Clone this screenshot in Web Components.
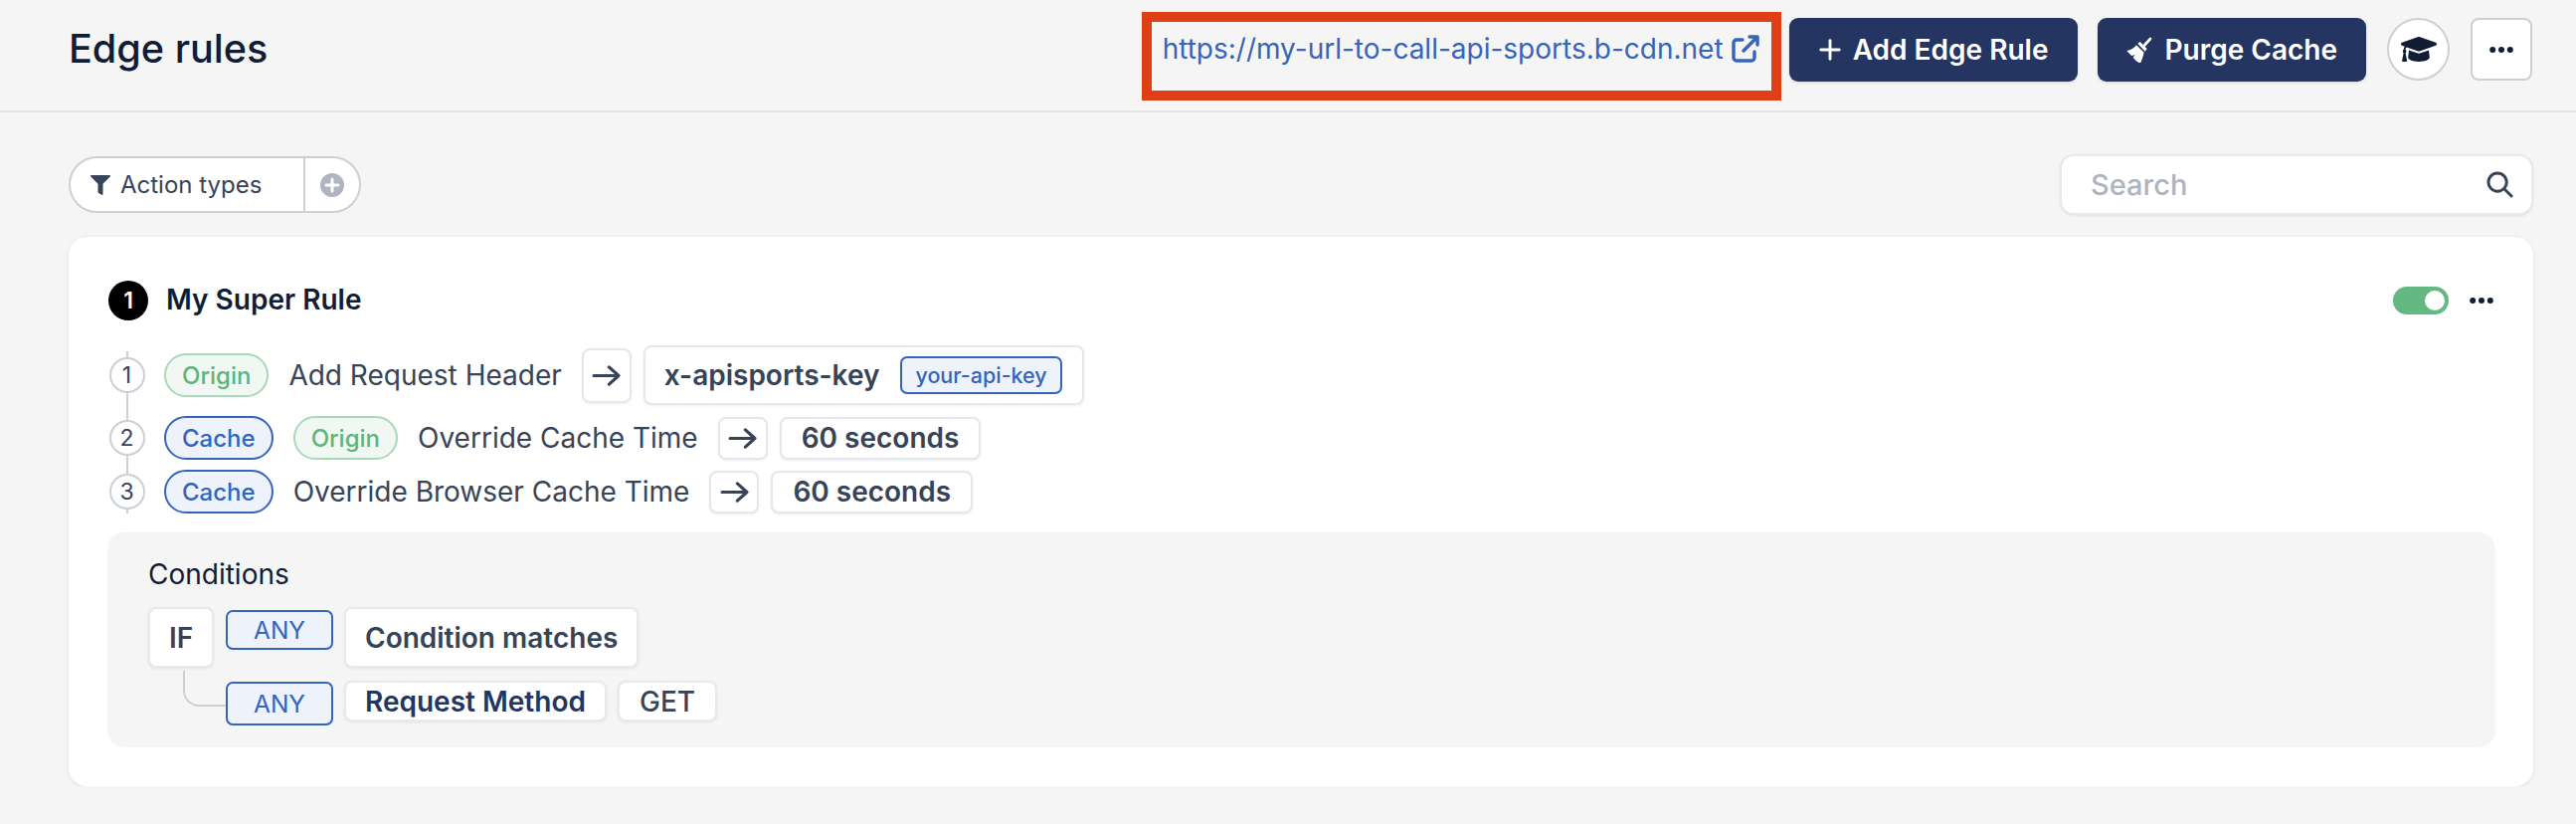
<!DOCTYPE html>
<html>
<head>
<meta charset="utf-8">
<title>Edge rules</title>
<style>
  html, body { margin: 0; background: #f5f5f5; }
  body { font-family: Inter, "Liberation Sans", sans-serif; color: #374357; font-size: 28px; }
</style>
</head>
<body>

<er-header></er-header>
<er-toolbar></er-toolbar>
<er-rule-card name="My Super Rule" index="1">
  <er-action num="1" first>
    <er-pill kind="green">Origin</er-pill>
    <er-label>Add Request Header</er-label>
    <er-box arrow tall></er-box>
    <er-box tall strong>x-apisports-key <er-chip>your-api-key</er-chip></er-box>
  </er-action>
  <er-action num="2">
    <er-pill kind="blue">Cache</er-pill>
    <er-pill kind="green">Origin</er-pill>
    <er-label>Override Cache Time</er-label>
    <er-box arrow></er-box>
    <er-box strong>60 seconds</er-box>
  </er-action>
  <er-action num="3" last>
    <er-pill kind="blue">Cache</er-pill>
    <er-label>Override Browser Cache Time</er-label>
    <er-box arrow></er-box>
    <er-box strong>60 seconds</er-box>
  </er-action>
  <er-conditions slot="conditions"></er-conditions>
</er-rule-card>

<script>
const ICONS = {
  plus: '<svg viewBox="0 0 24 24" width="22" height="22"><path d="M12 2v20M2 12h20" stroke="currentColor" stroke-width="3.2" stroke-linecap="round" fill="none"/></svg>',
  broom: '<svg viewBox="0 0 78 78" width="26" height="26" fill="currentColor"><path d="M72 6L50 30" stroke="currentColor" stroke-width="8" stroke-linecap="round" fill="none"/><path d="M34 20l7-5 21 21-6 8z"/><path d="M30 25l23 22c-3 13-7 24-11 33-11-6-16-10-22-18l6-9-10 5C10 52 5 47 1 42c12-2 23-8 29-17z"/></svg>',
  cap: '<svg viewBox="0 64 640 384" width="36" height="25" preserveAspectRatio="none" fill="currentColor"><path d="M622.34 153.2L343.4 67.5c-15.2-4.67-31.6-4.67-46.79 0L17.66 153.2c-23.54 7.23-23.54 38.36 0 45.59l48.63 14.94c-10.67 13.19-17.23 29.28-17.88 46.9C38.78 266.15 32 276.11 32 288c0 10.78 5.68 19.85 13.86 25.65L20.33 428.53C18.11 438.52 25.71 448 35.94 448h56.11c10.24 0 17.84-9.48 15.62-19.47L82.14 313.65C90.32 307.85 96 298.78 96 288c0-11.57-6.47-21.25-15.66-26.87.76-15.02 8.44-28.3 20.69-36.72L296.6 284.5c9.06 2.78 26.44 6.25 46.79 0l278.95-85.7c23.55-7.24 23.55-38.36 0-45.6zM352.79 315.09c-28.53 8.76-52.84 3.92-65.59 0l-145.02-44.55L128 384c0 35.35 85.96 64 192 64s192-28.65 192-64l-14.18-113.47-145.03 44.56z"/></svg>',
  dots: '<svg viewBox="0 0 24 6" width="24" height="6" fill="currentColor"><circle cx="3.2" cy="3" r="3"/><circle cx="12" cy="3" r="3"/><circle cx="20.8" cy="3" r="3"/></svg>',
  external: '<svg viewBox="0 0 28 28" width="28" height="28" fill="none" stroke="currentColor" stroke-width="3.4" stroke-linecap="round" stroke-linejoin="round"><path d="M11 5H5a3 3 0 0 0-3 3v15a3 3 0 0 0 3 3h15a3 3 0 0 0 3-3v-6"/><path d="M18 2h8v8M26 2L12 16"/></svg>',
  filter: '<svg viewBox="0 0 512 512" width="20" height="20" fill="currentColor"><path d="M487.976 0H24.028C2.71 0-8.047 25.866 7.058 40.971L192 225.941V432c0 7.831 3.821 15.17 10.237 20.662l80 55.99C298.02 519.698 320 508.666 320 487.99V225.941l184.947-184.97C520.021 25.896 509.338 0 487.976 0z"/></svg>',
  addCircle: '<svg viewBox="0 0 24 24" width="24" height="24"><circle cx="12" cy="12" r="12" fill="#aeb4c0"/><path d="M12 6v12M6 12h12" stroke="#fff" stroke-width="3" stroke-linecap="round"/></svg>',
  search: '<svg viewBox="0 0 28 28" width="27" height="27" fill="none" stroke="#374357" stroke-width="3"><circle cx="11.5" cy="11.5" r="9.5"/><path d="M18.5 18.5L26 26" stroke-linecap="round"/></svg>',
  arrow: '<svg viewBox="0 0 30 24" width="29" height="23" fill="none" stroke="#374357" stroke-width="3.3" stroke-linecap="round" stroke-linejoin="round"><path d="M2 12h26M18 3l10 9-10 9"/></svg>'
};

function define(name, css, html) {
  customElements.define(name, class extends HTMLElement {
    connectedCallback() {
      if (this.shadowRoot) return;
      this.attachShadow({ mode: 'open' });
      this.shadowRoot.innerHTML = `<style>${css}</style>` + (typeof html === 'function' ? html(this) : html);
    }
  });
}

// -- header --
define('er-header', `
  :host { display: flex; box-sizing: border-box; height: 113px; padding: 18px 44px 0 69px; border-bottom: 2px solid #e4e8ec; }
  h1 { margin: 0 auto 0 0; height: 64px; line-height: 62px; font-size: 39.6px; font-weight: 500; color: #111d35; }
  .right { display: flex; align-items: flex-start; }
`, `
  <h1>Edge rules</h1>
  <div class="right">
    <er-link>https://my-url-to-call-api-sports.b-cdn.net</er-link>
    <er-button icon="plus">Add Edge Rule</er-button>
    <er-button icon="broom" style="margin-left:20px;padding:0 29px">Purge Cache</er-button>
    <er-icon-button round icon="cap" style="margin-left:21px"></er-icon-button>
    <er-icon-button icon="dots" style="margin-left:21px;width:62px"></er-icon-button>
  </div>
`);

define('er-link', `
  :host { display: flex; box-sizing: border-box; width: 643px; height: 88.5px; margin: -6px 8px 0 0; padding: 0 0 14px 11px; border: 10px solid #e03f16; align-items: center; gap: 8px; color: #3564bb; font-size: 28px; white-space: nowrap; }
  svg { display: block; }
`, () => `<span><slot></slot></span>${ICONS.external}`);

define('er-button', `
  :host { display: inline-flex; box-sizing: border-box; height: 64px; padding: 0 30px; align-items: center; gap: 12px; background: #233560; color: #fff; border-radius: 9px; font-size: 28px; font-weight: 600; white-space: nowrap; box-shadow: 0 1px 3px rgba(0,0,0,.12); }
  svg { display: block; }
`, el => `${ICONS[el.getAttribute('icon')]}<span><slot></slot></span>`);

define('er-icon-button', `
  :host { display: flex; box-sizing: border-box; width: 63px; height: 63px; align-items: center; justify-content: center; background: #fff; border: 2px solid #cbd0d6; border-radius: 8px; color: #111d35; }
  :host([round]) { border-radius: 50%; }
  svg { display: block; }
`, el => ICONS[el.getAttribute('icon')]);

// -- filter and search row --
define('er-toolbar', `
  :host { display: flex; justify-content: space-between; align-items: center; box-sizing: border-box; height: 61px; margin: 42px 43px 22px 69px; }
`, `<er-filter>Action types</er-filter><er-search></er-search>`);

define('er-filter', `
  :host { display: flex; box-sizing: border-box; width: 294px; height: 57px; background: #fff; border: 2px solid #cbd0d6; border-radius: 29px; font-size: 24px; color: #374357; overflow: hidden; }
  .main { display: flex; align-items: center; gap: 10px; box-sizing: border-box; width: 236px; padding-left: 20px; border-right: 2px solid #cbd0d6; white-space: nowrap; }
  .add { flex: 1; display: flex; align-items: center; justify-content: center; padding-right: 1px; }
  svg { display: block; }
`, () => `<div class="main">${ICONS.filter}<span><slot></slot></span></div><div class="add">${ICONS.addCircle}</div>`);

define('er-search', `
  :host { display: flex; box-sizing: border-box; width: 476px; height: 61px; align-items: center; justify-content: space-between; padding: 0 18px 0 29px; background: #fff; border: 2px solid #e6e9ed; border-radius: 14px; box-shadow: 0 1px 3px rgba(0,0,0,.08); color: #aeb4c0; font-size: 29px; font-weight: 500; }
  svg { display: block; }
`, () => `<span>Search</span>${ICONS.search}`);

// -- rule card --
define('er-rule-card', `
  :host { display: block; box-sizing: border-box; width: 2478px; height: 552px; margin-left: 69px; padding: 44px 39px 40px 40px; background: #fff; border-radius: 18px; box-shadow: 0 1px 4px rgba(0,0,0,.1); }
  .head { display: flex; align-items: center; height: 40px; margin-bottom: 25px; }
  .index { display: flex; align-items: center; justify-content: center; width: 40px; height: 40px; border-radius: 50%; background: #000; color: #fff; font-size: 23px; font-weight: 600; }
  .name { margin-left: 18px; padding-bottom: 3px; font-size: 28px; font-weight: 600; color: #111d35; }
  .toggle { display: flex; justify-content: flex-end; align-items: center; box-sizing: border-box; width: 56px; height: 28px; margin-left: auto; padding-right: 4px; border-radius: 14px; background: #63b981; }
  .toggle i { display: block; width: 20px; height: 20px; border-radius: 50%; background: #fff; }
  .more { display: flex; margin: 0 1px 0 21px; color: #111d35; }
  .actions { display: block; margin-bottom: 19px; }
`, el => `
  <div class="head">
    <span class="index">${el.getAttribute('index')}</span>
    <span class="name">${el.getAttribute('name')}</span>
    <span class="toggle"><i></i></span>
    <span class="more">${ICONS.dots}</span>
  </div>
  <div class="actions"><slot></slot></div>
  <slot name="conditions"></slot>
`);

define('er-action', `
  :host { display: flex; gap: 19px; --line: linear-gradient(#cbd0d6, #cbd0d6); }
  .num { display: flex; align-items: center; justify-content: center; box-sizing: border-box; width: 37px; padding-bottom: 10px; background: var(--line) center / 2px 100% no-repeat; }
  :host([first]) .num { padding-bottom: 11px; background-size: 2px calc(100% - 6px); background-position: center bottom; }
  :host([last]) .num { padding-bottom: 0; }
  .num span { display: flex; align-items: center; justify-content: center; box-sizing: border-box; width: 36px; height: 36px; border-radius: 50%; background: #fff; border: 2px solid #cbd0d6; color: #374357; font-size: 23px; }
  .row { display: flex; align-items: center; gap: 20px; padding-bottom: 10px; }
  :host([first]) .row { padding-bottom: 11px; }
  :host([last]) .row { padding-bottom: 0; }
`, el => `<div class="num"><span>${el.getAttribute('num')}</span></div><div class="row"><slot></slot></div>`);

define('er-pill', `
  :host { display: inline-flex; box-sizing: border-box; height: 44px; align-items: center; padding: 0 16px; border-radius: 22px; font-size: 24px; font-weight: 500; border: 2px solid; }
  :host([kind=green]) { color: #5cb57a; background: #f1f8f3; border-color: #a8d8b8; }
  :host([kind=blue]) { color: #3564bb; background: #eef2fb; border-color: #3564bb; }
`, `<slot></slot>`);

define('er-label', `
  :host { display: inline-block; color: #374357; font-size: 28px; white-space: nowrap; }
`, `<slot></slot>`);

define('er-box', `
  :host { display: inline-flex; box-sizing: border-box; height: 43px; align-items: center; gap: 21px; padding: 0 20px; background: #fff; border: 2px solid #e4e7eb; border-radius: 8px; box-shadow: 0 1px 3px rgba(0,0,0,.07); color: #374357; font-size: 28px; white-space: nowrap; }
  :host([strong]) { font-weight: 600; margin-left: -8px; }
  :host([tall][strong]) { height: 60px; padding: 0 20px 0 19px; }
  :host([arrow]) { width: 50px; padding: 0; justify-content: center; }
  :host([arrow][tall]) { height: 55px; }
  svg { display: block; }
`, el => el.hasAttribute('arrow') ? ICONS.arrow : `<slot></slot>`);

define('er-chip', `
  :host { display: inline-flex; box-sizing: border-box; height: 38px; align-items: center; padding: 0 13px; background: #eef2fb; color: #3564bb; border: 2px solid #3564bb; border-radius: 7px; font-size: 21.5px; font-weight: 500; }
`, `<slot></slot>`);

// -- conditions --
define('er-conditions', `
  :host { display: block; box-sizing: border-box; height: 214px; padding: 26px 41px 0 40px; background: #f5f5f5; border-radius: 16px; box-shadow: 0 1px 3px rgba(0,0,0,.08); }
  .title { height: 33px; margin-bottom: 16px; line-height: 32px; font-size: 28px; color: #111d35; }
  .line { display: flex; align-items: flex-start; gap: 11px; }
  .line + .line { margin-top: 13px; padding-left: 78px; }
`, `
  <div class="title">Conditions</div>
  <div class="line">
    <er-cond-box style="width:66px;height:61px">IF</er-cond-box>
    <er-any style="margin:3px 0 0 1px;height:40px">ANY</er-any>
    <er-cond-box style="height:61px;padding:0 19px">Condition matches</er-cond-box>
  </div>
  <div class="line">
    <er-any branch style="margin-top:1px;height:44px">ANY</er-any>
    <er-cond-box dark style="height:41px;padding:0 19px">Request Method</er-cond-box>
    <er-cond-box style="height:41px;padding:0 20px;font-weight:500">GET</er-cond-box>
  </div>
`);

define('er-cond-box', `
  :host { display: inline-flex; box-sizing: border-box; align-items: center; justify-content: center; background: #fff; border: 2px solid #e6e9ed; border-radius: 8px; box-shadow: 0 1px 3px rgba(0,0,0,.08); color: #374357; font-size: 28px; font-weight: 600; white-space: nowrap; }
  :host([dark]) { color: #233560; }
`, `<slot></slot>`);

define('er-any', `
  :host { display: inline-flex; position: relative; box-sizing: border-box; width: 108px; align-items: center; justify-content: center; background: #eef2fb; border: 2px solid #3564bb; border-radius: 7px; color: #3564bb; font-size: 24.5px; }
  :host([branch])::before { content: ""; position: absolute; left: -45px; top: -13px; width: 43px; height: 36px; box-sizing: border-box; border-left: 2px solid #cbd0d6; border-bottom: 2px solid #cbd0d6; border-bottom-left-radius: 16px; }
`, `<slot></slot>`);
</script>
</body>
</html>
